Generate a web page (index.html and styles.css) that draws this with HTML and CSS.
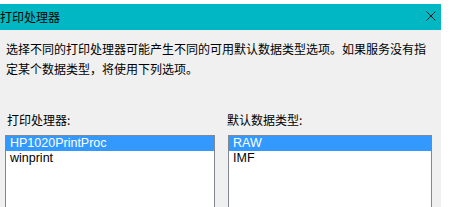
FILE: index.html
```html
<!DOCTYPE html>
<html lang="zh-CN">
<head>
    <meta charset="UTF-8">
    <title>打印处理器</title>
    <link rel="stylesheet" href="styles.css">
</head>
<body>
    <div class="janela">
        <div class="barra-titulo">
            <span class="titulo">打印处理器</span>
            <svg class="fechar" width="10" height="10" viewBox="0 0 10 10">
                <path d="M0.5 0.5 L9.5 9.5 M9.5 0.5 L0.5 9.5" stroke="#1a1a1a" stroke-width="1" fill="none"/>
            </svg>
        </div>
        <div class="conteudo">
            <p class="explicacao">
                选择不同的打印处理器可能产生不同的可用默认数据类型选项。如果服务没有指<br>定某个数据类型，将使用下列选项。
            </p>
            <div class="colunas">
                <div class="coluna esquerda">
                    <div class="rotulo">打印处理器:</div>
                    <ul class="lista">
                        <li class="selecionado">HP1020PrintProc</li>
                        <li>winprint</li>
                    </ul>
                </div>
                <div class="coluna direita">
                    <div class="rotulo">默认数据类型:</div>
                    <ul class="lista">
                        <li class="selecionado">RAW</li>
                        <li>IMF</li>
                    </ul>
                </div>
            </div>
        </div>
    </div>
</body>
</html>
```

FILE: styles.css
```css
body {
    margin: 0;
    padding-top: 4px;
    background-color: #ffffff;
    font-family: "Noto Sans CJK SC", sans-serif;
    font-size: 12px;
    color: #000000;
    height: 203px;
    overflow: hidden;
}

.janela {
    width: 441px;
    height: 203px;
    background-color: #f0f0f0;
    overflow: hidden;
}

.barra-titulo {
    height: 26px;
    background-color: #00b7c3;
    display: flex;
    align-items: center;
    justify-content: space-between;
    padding: 0 5px 0 0;
}

.titulo {
    line-height: 26px;
    margin-top: -1px;
}

.fechar {
    margin-top: -2px;
}

.conteudo {
    padding-top: 9px;
}

.explicacao {
    margin: 0;
    padding-left: 6px;
    line-height: 20px;
}

.colunas {
    display: flex;
    gap: 13px;
    padding-left: 5px;
    margin-top: 33px;
}

.esquerda {
    width: 210px;
}

.direita {
    width: 204px;
}

.rotulo {
    line-height: 16px;
    height: 16px;
    margin-bottom: 7px;
}

.esquerda .rotulo {
    padding-left: 2px;
}

.direita .rotulo {
    margin-left: -1px;
}

.lista {
    list-style: none;
    margin: 0;
    padding: 0;
    height: 72px;
    background-color: #ffffff;
    border: 1px solid #828790;
    border-bottom: none;
    font-family: "Liberation Sans", Arial, sans-serif;
    font-size: 12.5px;
}

.lista li {
    height: 15px;
    line-height: 15px;
    padding-left: 4px;
}

.lista .selecionado {
    background-color: #3399ff;
    color: #ffffff;
}
```
